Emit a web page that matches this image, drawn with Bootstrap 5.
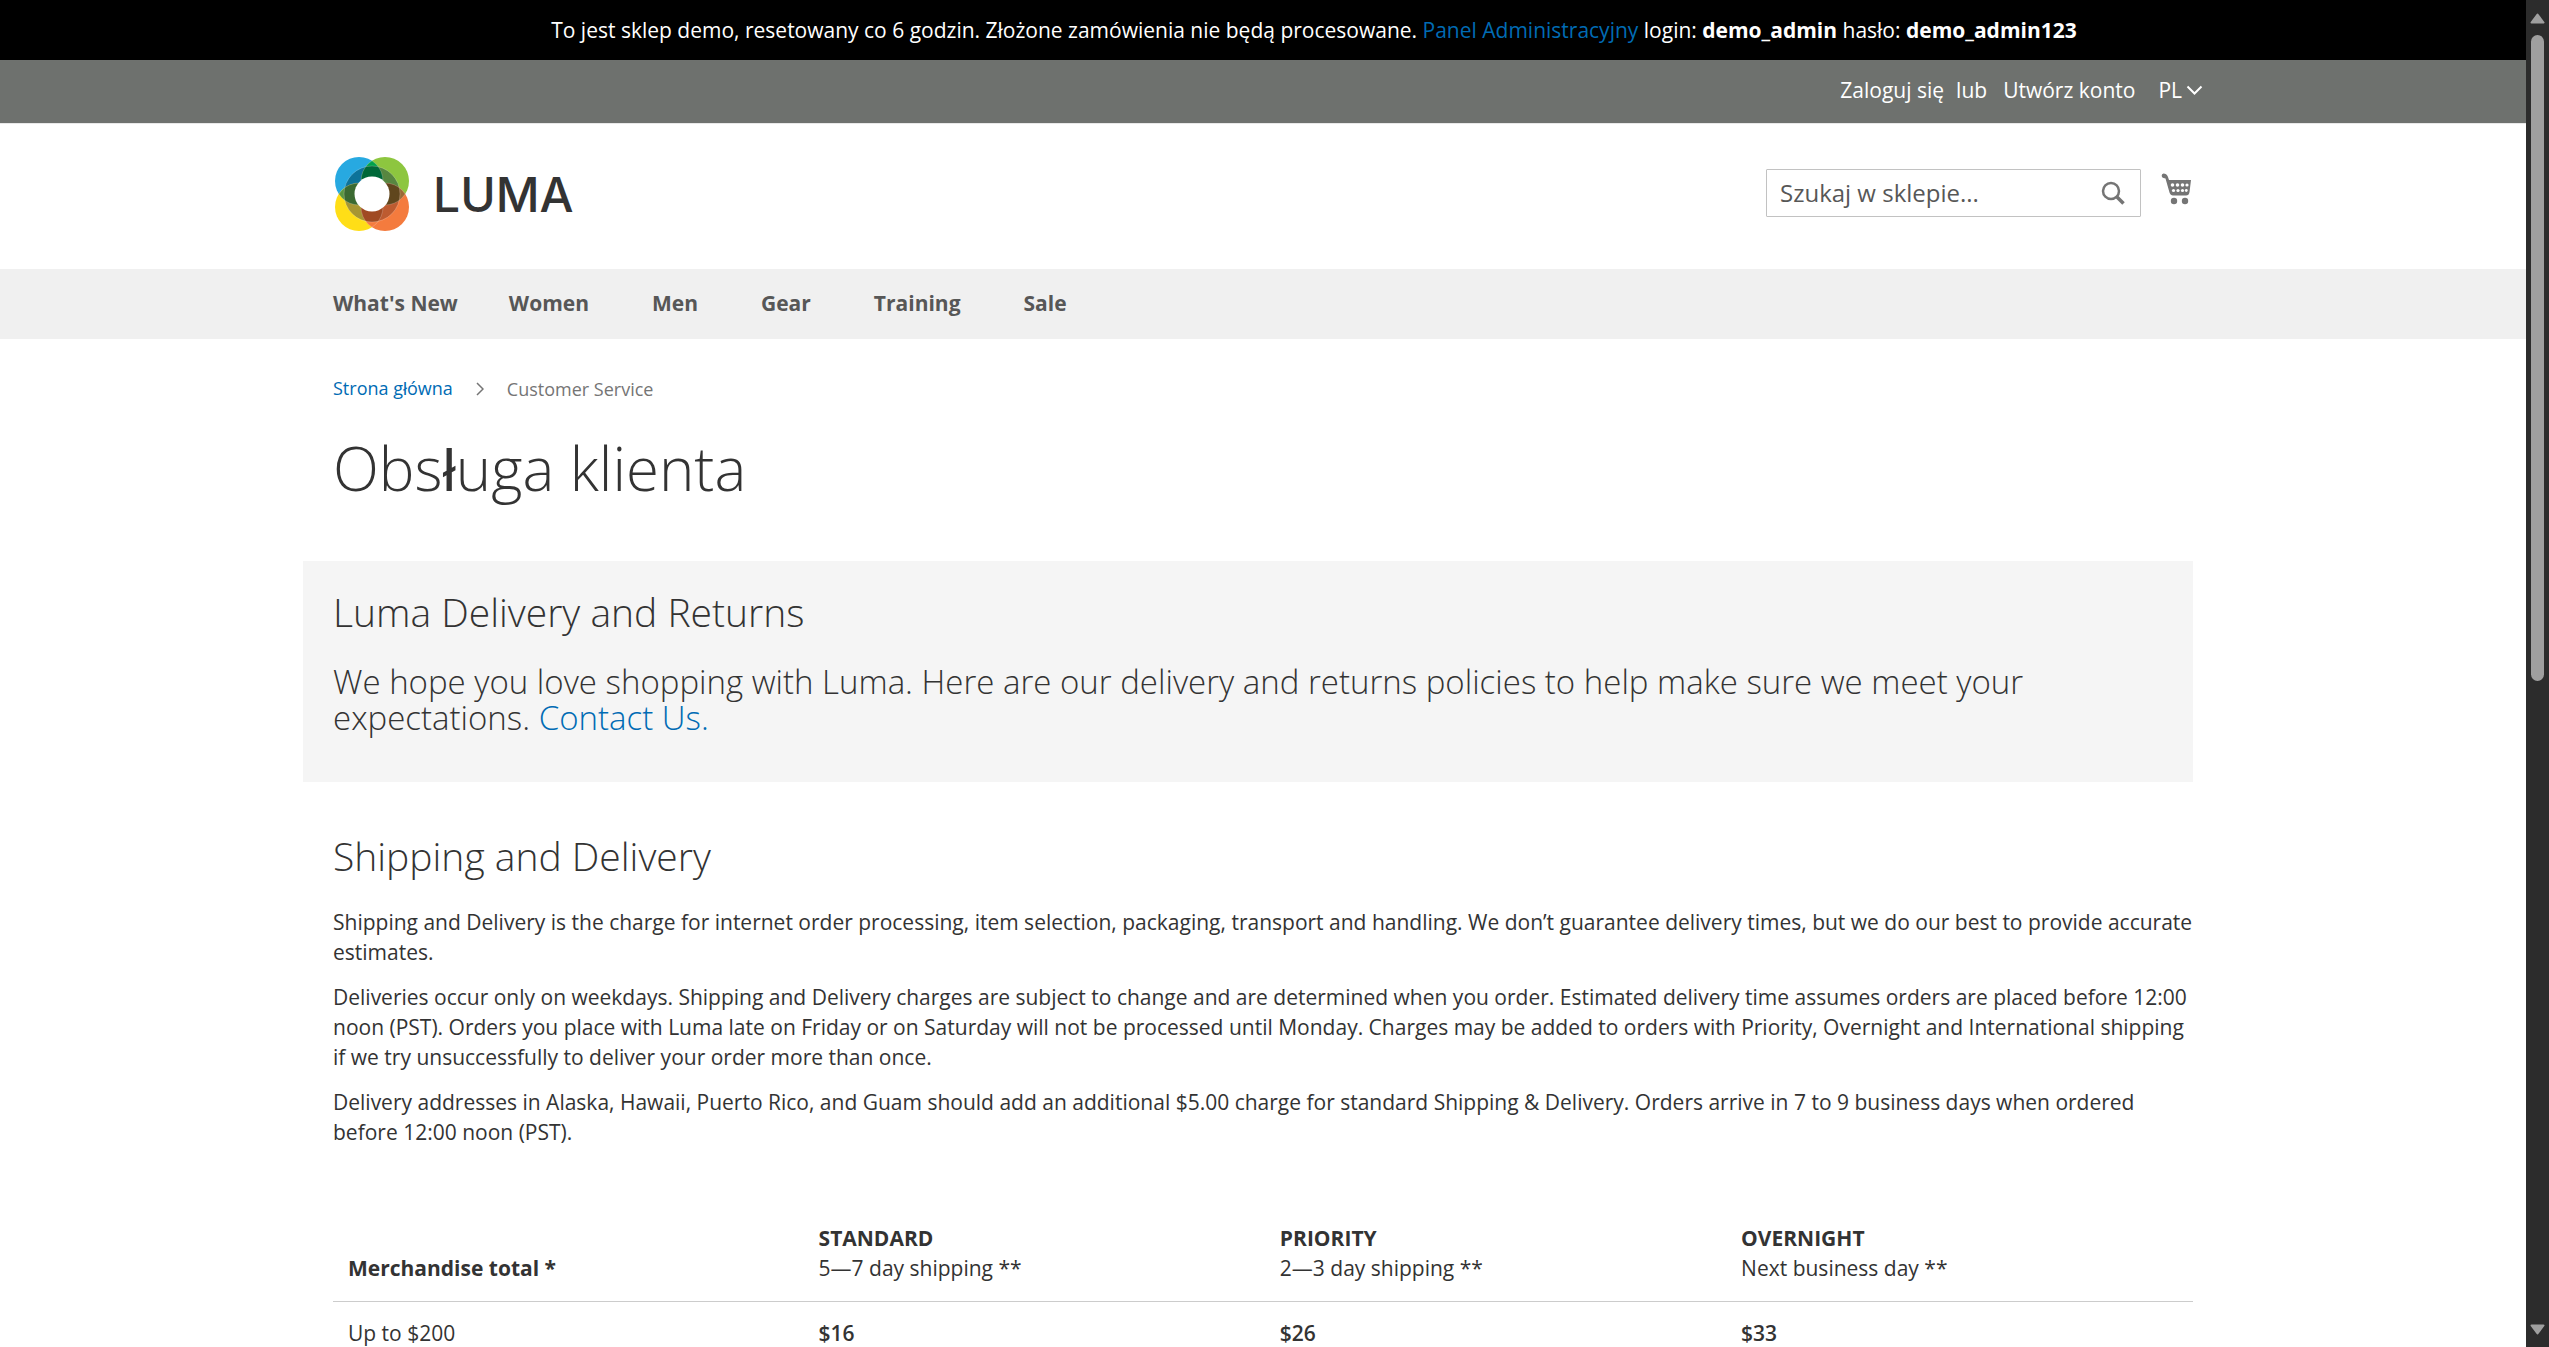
<!DOCTYPE html>
<html lang="pl">
<head>
<meta charset="utf-8">
<meta name="viewport" content="width=device-width, initial-scale=1">
<title>Obsługa klienta</title>
<link rel="stylesheet" href="https://cdn.jsdelivr.net/npm/bootstrap@5.3.0/dist/css/bootstrap.min.css">
<style>
  body { font-family: "Open Sans", sans-serif; font-size: 21px; line-height: 30px; color: #333; background: #fff; height: 100vh; overflow: hidden; }
  a { color: #006bb4; text-decoration: none; }
  h1, h2 { font-weight: 300; color: #333; line-height: 1.1; margin: 0; }
  p { margin: 0 0 15px; }
  .site-viewport { height: 100vh; overflow: hidden; }
  .shell { max-width: 1920px; margin: 0 auto; padding: 0 30px; width: 100%; }
  .demo-note { background: #000; color: #fff; padding: 15px 15px 15px 117px; text-align: center; }
  .demo-note strong { font-weight: 700; }
  .top-panel { background: #6e716e; color: #fff; height: 63px; padding-bottom: 3px; }
  .top-panel a { color: #fff; }
  .top-links { margin-right: -10px; }
  .lang-btn { background: none; border: 0; color: #fff; padding: 0; margin-left: 15px; }
  .brand-bar { border-top: 1px solid #e8e8e8; height: 146px; padding-bottom: 4px; }
  .brand-tools { padding-bottom: 3px; }
  .brand-word { font-family: Inter, sans-serif; font-weight: 500; font-size: 48px; line-height: 48px; color: #333; }
  .search-box { width: 375px; height: 48px; border: 1px solid #c2c2c2; border-radius: 1px; }
  .search-box input { border: 0; outline: 0; background: none; font-size: 24px; line-height: 36px; padding: 0 0 0 13px; color: #575757; min-width: 0; }
  .search-box input::placeholder { color: #575757; opacity: 1; }
  .search-btn { margin-right: 15px; }
  .plain-btn { border: 0; background: none; padding: 0; line-height: 0; }
  .main-menu { background: #f0f0f0; height: 70px; }
  .main-menu a { color: #575757; font-weight: 700; padding-right: 30px; margin-right: 33px; line-height: 69px; }
  .main-menu a.leaf { padding-right: 18px; }
  .crumbs { font-size: 18px; line-height: 24px; padding-top: 37px; color: #757575; }
  .crumb-mark { margin: 0 23px; }
  .page-title { font-size: 60px; padding-top: 34px; }
  .glyph-alt { font-family: "Liberation Sans", sans-serif; }
  .intro { background: #f5f5f5; margin: 57px 0 0 -30px; padding: 29px 30px; height: 221px; }
  .intro h2, .section-title { font-size: 39px; line-height: 43px; }
  .intro p { font-size: 33px; line-height: 36px; font-weight: 300; margin-top: 31px; }
  .section-title { margin: 52px 0 30px; }
  .rates { margin-top: 60px; width: 100%; table-layout: fixed; }
  .rates th, .rates td { padding: 16px 15px; vertical-align: bottom; }
  .rates thead th { border-bottom: 1px solid #ccc; font-weight: 700; padding-bottom: 18px; }
  .rates thead span { font-weight: 400; display: block; }
  .rates td:not(:first-child) { font-weight: 600; }
  .rates .col-first { width: 25.3%; }
  .rates .col-rate { width: 24.8%; }
  .scroll-rail { width: 23px; background: #2c2c2c; padding: 13px 0 12px; }
  .scroll-grip { width: 13px; height: 646px; border-radius: 7px; background: #9f9f9f; margin-top: 11px; }
</style>
<script src="https://cdn.jsdelivr.net/npm/bootstrap@5.3.0/dist/js/bootstrap.bundle.min.js"></script>
</head>
<body class="d-flex">
<div class="site-viewport flex-grow-1">
  <div class="demo-note">To jest sklep demo, resetowany co 6 godzin. Złożone zamówienia nie będą procesowane. <a href="#">Panel Administracyjny</a> login: <strong>demo_admin</strong> hasło: <strong>demo_admin123</strong></div>

  <header>
    <div class="top-panel d-flex align-items-center">
      <div class="shell d-flex justify-content-end">
        <div class="top-links d-flex align-items-center gap-2">
          <a href="#">Zaloguj się</a><span class="ms-1 me-2">lub</span><a href="#">Utwórz konto</a>
          <button type="button" class="lang-btn d-flex align-items-center gap-1">PL
            <svg width="17" height="12" viewBox="0 0 17 12" fill="none" stroke="#fff" stroke-width="2"><path d="M1.500 2.500 8.500 9.500 15.500 2.500"/></svg>
          </button>
        </div>
      </div>
    </div>

    <div class="brand-bar d-flex align-items-center">
      <div class="shell d-flex align-items-center justify-content-between">
        <a href="#" class="d-flex align-items-center gap-4" aria-label="Luma">
          <svg width="76" height="75" viewBox="-2 0 76 75">
            <defs>
              <clipPath id="cBlue"><circle cx="24" cy="24" r="24"/></clipPath>
              <clipPath id="cYellow"><circle cx="24" cy="50" r="24"/></clipPath>
              <clipPath id="cGreen"><circle cx="50" cy="24" r="24"/></clipPath>
              <clipPath id="cOrange"><circle cx="50" cy="50" r="24"/></clipPath>
              <clipPath id="cRing"><circle cx="37" cy="37" r="28"/></clipPath>
            </defs>
            <circle cx="24" cy="24" r="24" fill="#27a9e1"/>
            <circle cx="50" cy="24" r="24" fill="#8dc63f"/>
            <circle cx="24" cy="50" r="24" fill="#ffde17"/>
            <circle cx="50" cy="50" r="24" fill="#f47b3e"/>
            <g clip-path="url(#cBlue)"><circle cx="50" cy="24" r="24" fill="#00a14b"/><circle cx="24" cy="50" r="24" fill="#5a9640"/></g>
            <g clip-path="url(#cOrange)"><circle cx="50" cy="24" r="24" fill="#9a6a35"/><circle cx="24" cy="50" r="24" fill="#f47b3e"/></g>
            <g clip-path="url(#cRing)">
              <circle cx="24" cy="24" r="24" fill="#0d7399"/>
              <circle cx="50" cy="24" r="24" fill="#578640"/>
              <circle cx="24" cy="50" r="24" fill="#a79632"/>
              <circle cx="50" cy="50" r="24" fill="#bd5b30"/>
              <g clip-path="url(#cBlue)"><circle cx="50" cy="24" r="24" fill="#006838"/><circle cx="24" cy="50" r="24" fill="#3b6a32"/></g>
              <g clip-path="url(#cOrange)"><circle cx="50" cy="24" r="24" fill="#60461d"/><circle cx="24" cy="50" r="24" fill="#a04a23"/></g>
            </g>
            <g fill="none" stroke="#fff" stroke-opacity=".35" stroke-width=".6">
              <circle cx="37" cy="37" r="28"/>
              <g clip-path="url(#cBlue)"><circle cx="50" cy="24" r="24"/><circle cx="24" cy="50" r="24"/></g>
              <g clip-path="url(#cOrange)"><circle cx="50" cy="24" r="24"/><circle cx="24" cy="50" r="24"/></g>
              <g clip-path="url(#cYellow)"><circle cx="24" cy="24" r="24"/><circle cx="50" cy="50" r="24"/></g>
              <g clip-path="url(#cGreen)"><circle cx="24" cy="24" r="24"/><circle cx="50" cy="50" r="24"/></g>
            </g>
            <circle cx="37" cy="37" r="17.500" fill="#fff"/>
          </svg>
          <span class="brand-word">LUMA</span>
        </a>
        <div class="brand-tools d-flex align-items-center">
          <form class="search-box d-flex align-items-center" role="search">
            <input id="q" type="text" class="flex-grow-1" placeholder="Szukaj w sklepie..." aria-label="Szukaj w sklepie">
            <button type="button" class="plain-btn search-btn" aria-label="Szukaj">
              <svg width="24" height="24" viewBox="0 0 24 24" fill="none" stroke="#757575"><circle cx="10" cy="10" r="8" stroke-width="2.500"/><path d="M15.500 15.500 22.500 22.500" stroke-width="3.500"/></svg>
            </button>
          </form>
          <button type="button" class="plain-btn pb-1" aria-label="Koszyk">
            <svg class="ms-3" width="36" height="36" viewBox="-4 0 36 36">
              <path fill="#757575" d="M2.500.5C4.500.5 6 1.600 6.800 3.500L8 7H30L28.500 19Q28 22.500 25 22.500H12Q9.500 22.500 8.500 19.500L4.500 5.500 2.500 5A2.300 2.300 0 0 1 2.500.5Z"/>
              <g fill="#fff"><circle cx="11.500" cy="12" r="1.800"/><circle cx="16.500" cy="12" r="1.800"/><circle cx="21.500" cy="12" r="1.800"/><circle cx="26" cy="12" r="1.600"/><circle cx="12.500" cy="17.500" r="1.600"/><circle cx="17" cy="17.500" r="1.600"/><circle cx="21.500" cy="17.500" r="1.600"/><circle cx="25.300" cy="17.500" r="1.400"/></g>
              <circle cx="13" cy="28" r="3.200" fill="#757575"/><circle cx="24" cy="28" r="3.200" fill="#757575"/>
            </svg>
          </button>
        </div>
      </div>
    </div>

    <nav class="main-menu">
      <div class="shell d-flex">
        <a href="#" class="leaf">What's New</a><a href="#">Women</a><a href="#">Men</a><a href="#">Gear</a><a href="#">Training</a><a href="#">Sale</a>
      </div>
    </nav>
  </header>

  <main class="shell">
    <nav class="crumbs d-flex align-items-center" aria-label="Breadcrumb">
      <a href="#">Strona g<span class="glyph-alt">ł</span>ówna</a>
      <svg class="crumb-mark" width="8" height="14" viewBox="0 0 8 14" fill="none" stroke="#757575" stroke-width="1.500"><path d="M1 1 7 7 1 13"/></svg>
      <span>Customer Service</span>
    </nav>
    <h1 class="page-title">Obs<span class="glyph-alt">ł</span>uga klienta</h1>

    <section class="intro">
      <h2>Luma Delivery and Returns</h2>
      <p>We hope you love shopping with Luma. Here are our delivery and returns policies to help make sure we meet your expectations. <a href="#">Contact Us.</a></p>
    </section>

    <section>
      <h2 class="section-title">Shipping and Delivery</h2>
      <p>Shipping and Delivery is the charge for internet order processing, item selection, packaging, transport and handling. We don’t guarantee delivery times, but we do our best to provide accurate estimates.</p>
      <p>Deliveries occur only on weekdays. Shipping and Delivery charges are subject to change and are determined when you order. Estimated delivery time assumes orders are placed before 12:00 noon (PST). Orders you place with Luma late on Friday or on Saturday will not be processed until Monday. Charges may be added to orders with Priority, Overnight and International shipping if we try unsuccessfully to deliver your order more than once.</p>
      <p>Delivery addresses in Alaska, Hawaii, Puerto Rico, and Guam should add an additional $5.00 charge for standard Shipping &amp; Delivery. Orders arrive in 7 to 9 business days when ordered before 12:00 noon (PST).</p>

      <table class="rates">
        <thead>
          <tr>
            <th class="col-first" scope="col">Merchandise total *</th>
            <th class="col-rate" scope="col">STANDARD<span>5—7 day shipping **</span></th>
            <th class="col-rate" scope="col">PRIORITY<span>2—3 day shipping **</span></th>
            <th scope="col">OVERNIGHT<span>Next business day **</span></th>
          </tr>
        </thead>
        <tbody>
          <tr><td>Up to $200</td><td>$16</td><td>$26</td><td>$33</td></tr>
        </tbody>
      </table>
    </section>
  </main>
</div>

<div class="scroll-rail d-flex flex-column align-items-center flex-shrink-0" aria-hidden="true">
  <svg width="15" height="11" viewBox="0 0 15 11"><path d="M7.500 1.500 13.500 9.500H1.500Z" fill="#9f9f9f" stroke="#9f9f9f" stroke-width="2" stroke-linejoin="round"/></svg>
  <div class="scroll-grip"></div>
  <svg class="mt-auto" width="15" height="11" viewBox="0 0 15 11"><path d="M7.500 9.500 13.500 1.500H1.500Z" fill="#9f9f9f" stroke="#9f9f9f" stroke-width="2" stroke-linejoin="round"/></svg>
</div>
</body>
</html>
